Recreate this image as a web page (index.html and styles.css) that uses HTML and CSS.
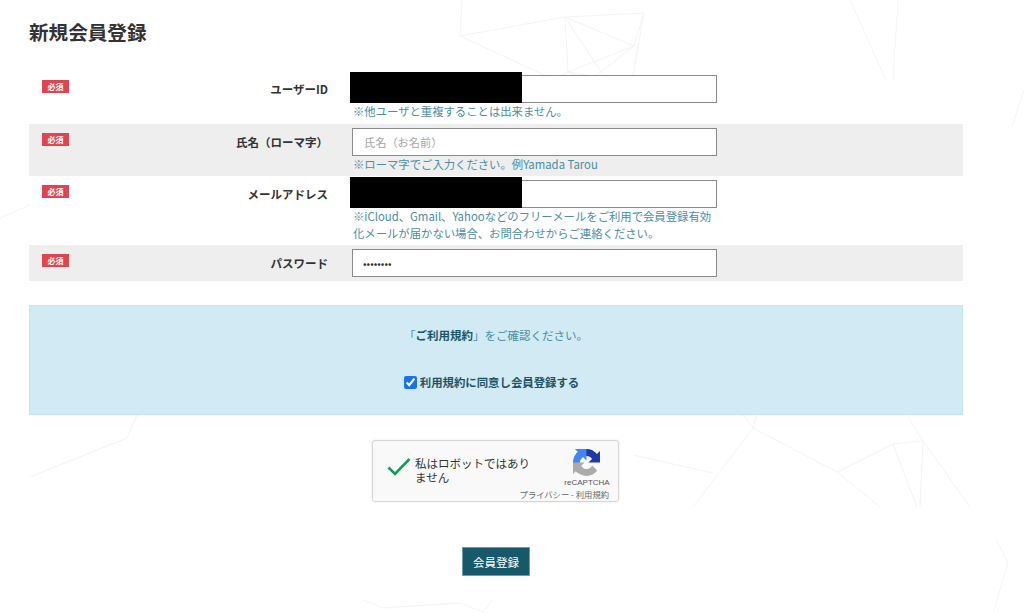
FILE: index.html
```html
<!DOCTYPE html>
<html lang="ja">
<head>
<meta charset="utf-8">
<title>新規会員登録</title>
<link rel="stylesheet" href="styles.css">
</head>
<body>
<svg class="backdrop" width="1024" height="613" viewBox="0 0 1024 613" aria-hidden="true">
  <path class="bg-line" d="M462 0L460 36L565 17L644 13L634 46L565 17L568 72L552 80M460 36L555 80M565 17L606 80M644 13L632 80M634 46L568 72L615 80M634 46L590 80M568 72L588 80"/>
  <path class="bg-line" d="M850 0L886 80M898 0L893 80M1024 90L1012 127M0 218L30 205"/>
  <path class="bg-line" d="M137 415L127 438L30 477M743 415L753 428L837 472L893 444L923 441L907 415M837 472L880 507M923 441L970 507M923 441L920 507M893 444L917 507M753 428L757 415M753 428L693 507M633 455L713 473"/>
  <path class="bg-line" d="M997 541L1008 563L993 613M363 600L383 608L460 603L483 612L492 600"/>
</svg>
<main class="page">
  <h1 class="title">新規会員登録</h1>
  <form class="form">
    <div class="row row-first">
      <span class="badge">必須</span>
      <label class="label">ユーザーID</label>
      <div class="field">
        <input class="input" type="text">
        <span class="redact"></span>
        <p class="hint">※他ユーザと重複することは出来ません。</p>
      </div>
    </div>
    <div class="row row-alt">
      <span class="badge">必須</span>
      <label class="label">氏名（ローマ字）</label>
      <div class="field">
        <input class="input" type="text" placeholder="氏名（お名前）">
        <p class="hint">※ローマ字でご入力ください。例Yamada Tarou</p>
      </div>
    </div>
    <div class="row row-tall">
      <span class="badge">必須</span>
      <label class="label">メールアドレス</label>
      <div class="field">
        <input class="input" type="text">
        <span class="redact"></span>
        <p class="hint">※iCloud、Gmail、Yahooなどのフリーメールをご利用で会員登録有効化メールが届かない場合、お問合わせからご連絡ください。</p>
      </div>
    </div>
    <div class="row row-alt row-short">
      <span class="badge">必須</span>
      <label class="label">パスワード</label>
      <div class="field">
        <input class="input input-pass" type="password" value="password">
      </div>
    </div>
    <section class="terms">
      <p class="terms-text">「<strong>ご利用規約</strong>」をご確認ください。</p>
      <label class="agree"><input class="agree-box" type="checkbox" checked>利用規約に同意し会員登録する</label>
    </section>
    <div class="captcha">
      <svg class="captcha-check" width="24" height="20" viewBox="0 0 24 20"><path d="M1.5 10.5L8 17L22.5 2" fill="none" stroke="#0f9d58" stroke-width="2.6"/></svg>
      <p class="captcha-text">私はロボットではありません</p>
      <div class="captcha-brand">
        <svg class="captcha-logo" width="27" height="27" viewBox="0 0 64 64">
          <path fill="#1c3aa9" d="M64 31.955l-.033-1.37V4.687l-7.16 7.16C50.948 4.674 42.033.093 32.05.093c-10.4 0-19.622 4.96-25.458 12.64l11.736 11.86a15.55 15.55 0 0 1 4.754-5.334c2.05-1.6 4.952-2.906 8.968-2.906.485 0 .86.057 1.135.163 4.976.393 9.29 3.14 11.83 7.125l-8.307 8.307L64 31.953"/>
          <path fill="#4285f4" d="M31.862 0l-1.37.033H4.594l7.16 7.16C4.58 13.052 0 21.967 0 31.95c0 10.4 4.96 19.622 12.64 25.458l11.86-11.736a15.55 15.55 0 0 1-5.334-4.754c-1.6-2.05-2.906-4.952-2.906-8.968 0-.485.057-.86.163-1.135.393-4.976 3.14-9.29 7.125-11.83l8.307 8.307L31.86 0"/>
          <path fill="#ababab" d="M.001 31.955l.033 1.37v25.9l7.16-7.16c5.86 7.173 14.775 11.754 24.76 11.754 10.4 0 19.621-4.96 25.457-12.64l-11.736-11.86a15.55 15.55 0 0 1-4.754 5.334c-2.05 1.6-4.952 2.906-8.968 2.906-.485 0-.86-.057-1.135-.163-4.976-.393-9.29-3.14-11.83-7.125l8.307-8.307c-10.522.001-22.4.024-29.295-.01"/>
        </svg>
        <span class="captcha-name">reCAPTCHA</span>
      </div>
      <span class="captcha-links">プライバシー - 利用規約</span>
    </div>
    <div class="actions"><button class="submit" type="button">会員登録</button></div>
  </form>
</main>
</body>
</html>
```
FILE: styles.css
```css
* { box-sizing: border-box; }
html, body { margin: 0; padding: 0; height: 613px; overflow: hidden; background: #fff; }
body {
  position: relative;
  font-family: "Noto Sans CJK JP", "Noto Sans", sans-serif;
  color: #333;
}
.backdrop { position: absolute; left: 0; top: 0; z-index: 0; }
.bg-line { fill: none; stroke: #f4f4f4; stroke-width: 1; }
.page { position: relative; z-index: 1; width: 934px; margin-left: 29px; }
.title { margin: 0; padding-top: 18px; height: 71px; font-size: 19.6px; line-height: 27px; font-weight: 700; color: #333; }
.row {
  display: grid;
  grid-template-columns: 40px 259px 371px;
  align-items: start;
  padding-top: 4px;
}
.row-first { height: 53px; }
.row-alt { background: #eee; height: 52px; }
.row-tall { height: 69px; }
.row-short { height: 36px; }
.badge {
  justify-self: end;
  width: 27px; height: 13px;
  margin-top: 5px;
  background: #e0454f;
  color: #fff;
  font-size: 8px; line-height: 13px; font-weight: 700; text-align: center;
}
.label { font-size: 11.5px; line-height: 28px; font-weight: 700; color: #333; text-align: right; }
.field { position: relative; margin-left: 24px; width: 365px; }
.input {
  display: block; width: 365px; height: 28px;
  margin: 0; padding: 0 10px 0 11px;
  border: 1px solid #8a8a8a; border-radius: 0; outline: none;
  background: #fff;
  font: 11.2px "Noto Sans CJK JP", sans-serif; color: #333;
}
.input-pass { padding-left: 10px; font-size: 10.5px; }
.input::placeholder { color: #a5a5a5; }
.redact { position: absolute; left: -2px; top: -3px; width: 172px; height: 31px; background: #000; }
.hint { margin: 0; padding-left: 1px; font-size: 11.35px; line-height: 16.8px; color: #4b8ea5; }
.terms {
  margin-top: 24px;
  height: 110px;
  padding-top: 20px;
  background: #d1eaf4;
  border: 1px solid #bfe6f2;
  text-align: center;
  color: #4b8ea5;
}
.terms-text { margin: 0; font-size: 11.5px; line-height: 18px; }
.terms-text strong { color: #1b5566; }
.agree {
  display: flex; align-items: center; justify-content: center; gap: 3px;
  margin-top: 29px;
  padding-right: 9px;
  font-size: 11.4px; line-height: 18px; font-weight: 700; color: #1b5566;
}
.agree-box { width: 13px; height: 13px; margin: 0; accent-color: #1a73e8; }
.captcha {
  position: relative;
  display: flex; align-items: flex-start;
  width: 247px; height: 62px;
  margin: 25px 0 0 343px;
  padding: 16px 0 0 14px;
  background: #f9f9f9;
  border: 1px solid #d6d6d6; border-radius: 3px;
  box-shadow: 0 0 3px rgba(0,0,0,.08);
}
.captcha-check { flex: none; }
.captcha-text { margin: -1px 0 0 4px; width: 118px; font-size: 11.5px; line-height: 14px; color: #333; }
.captcha-brand { position: absolute; right: 8px; top: 8px; width: 46px; display: flex; flex-direction: column; align-items: center; }
.captcha-logo { display: block; margin-right: 2px; }
.captcha-name { font: 8px/10px "Liberation Sans", sans-serif; color: #555; margin-top: 2px; white-space: nowrap; }
.captcha-links { position: absolute; right: 9px; bottom: 2px; font-size: 8.3px; line-height: 10px; color: #666; white-space: nowrap; }
.actions { display: flex; margin: 45px 0 0 433px; }
.submit {
  width: 68px; height: 29px; padding: 0;
  background: #17596a; border: 1px solid #6d9dac;
  color: #fff; font: 11.5px "Noto Sans CJK JP", sans-serif;
}
```
